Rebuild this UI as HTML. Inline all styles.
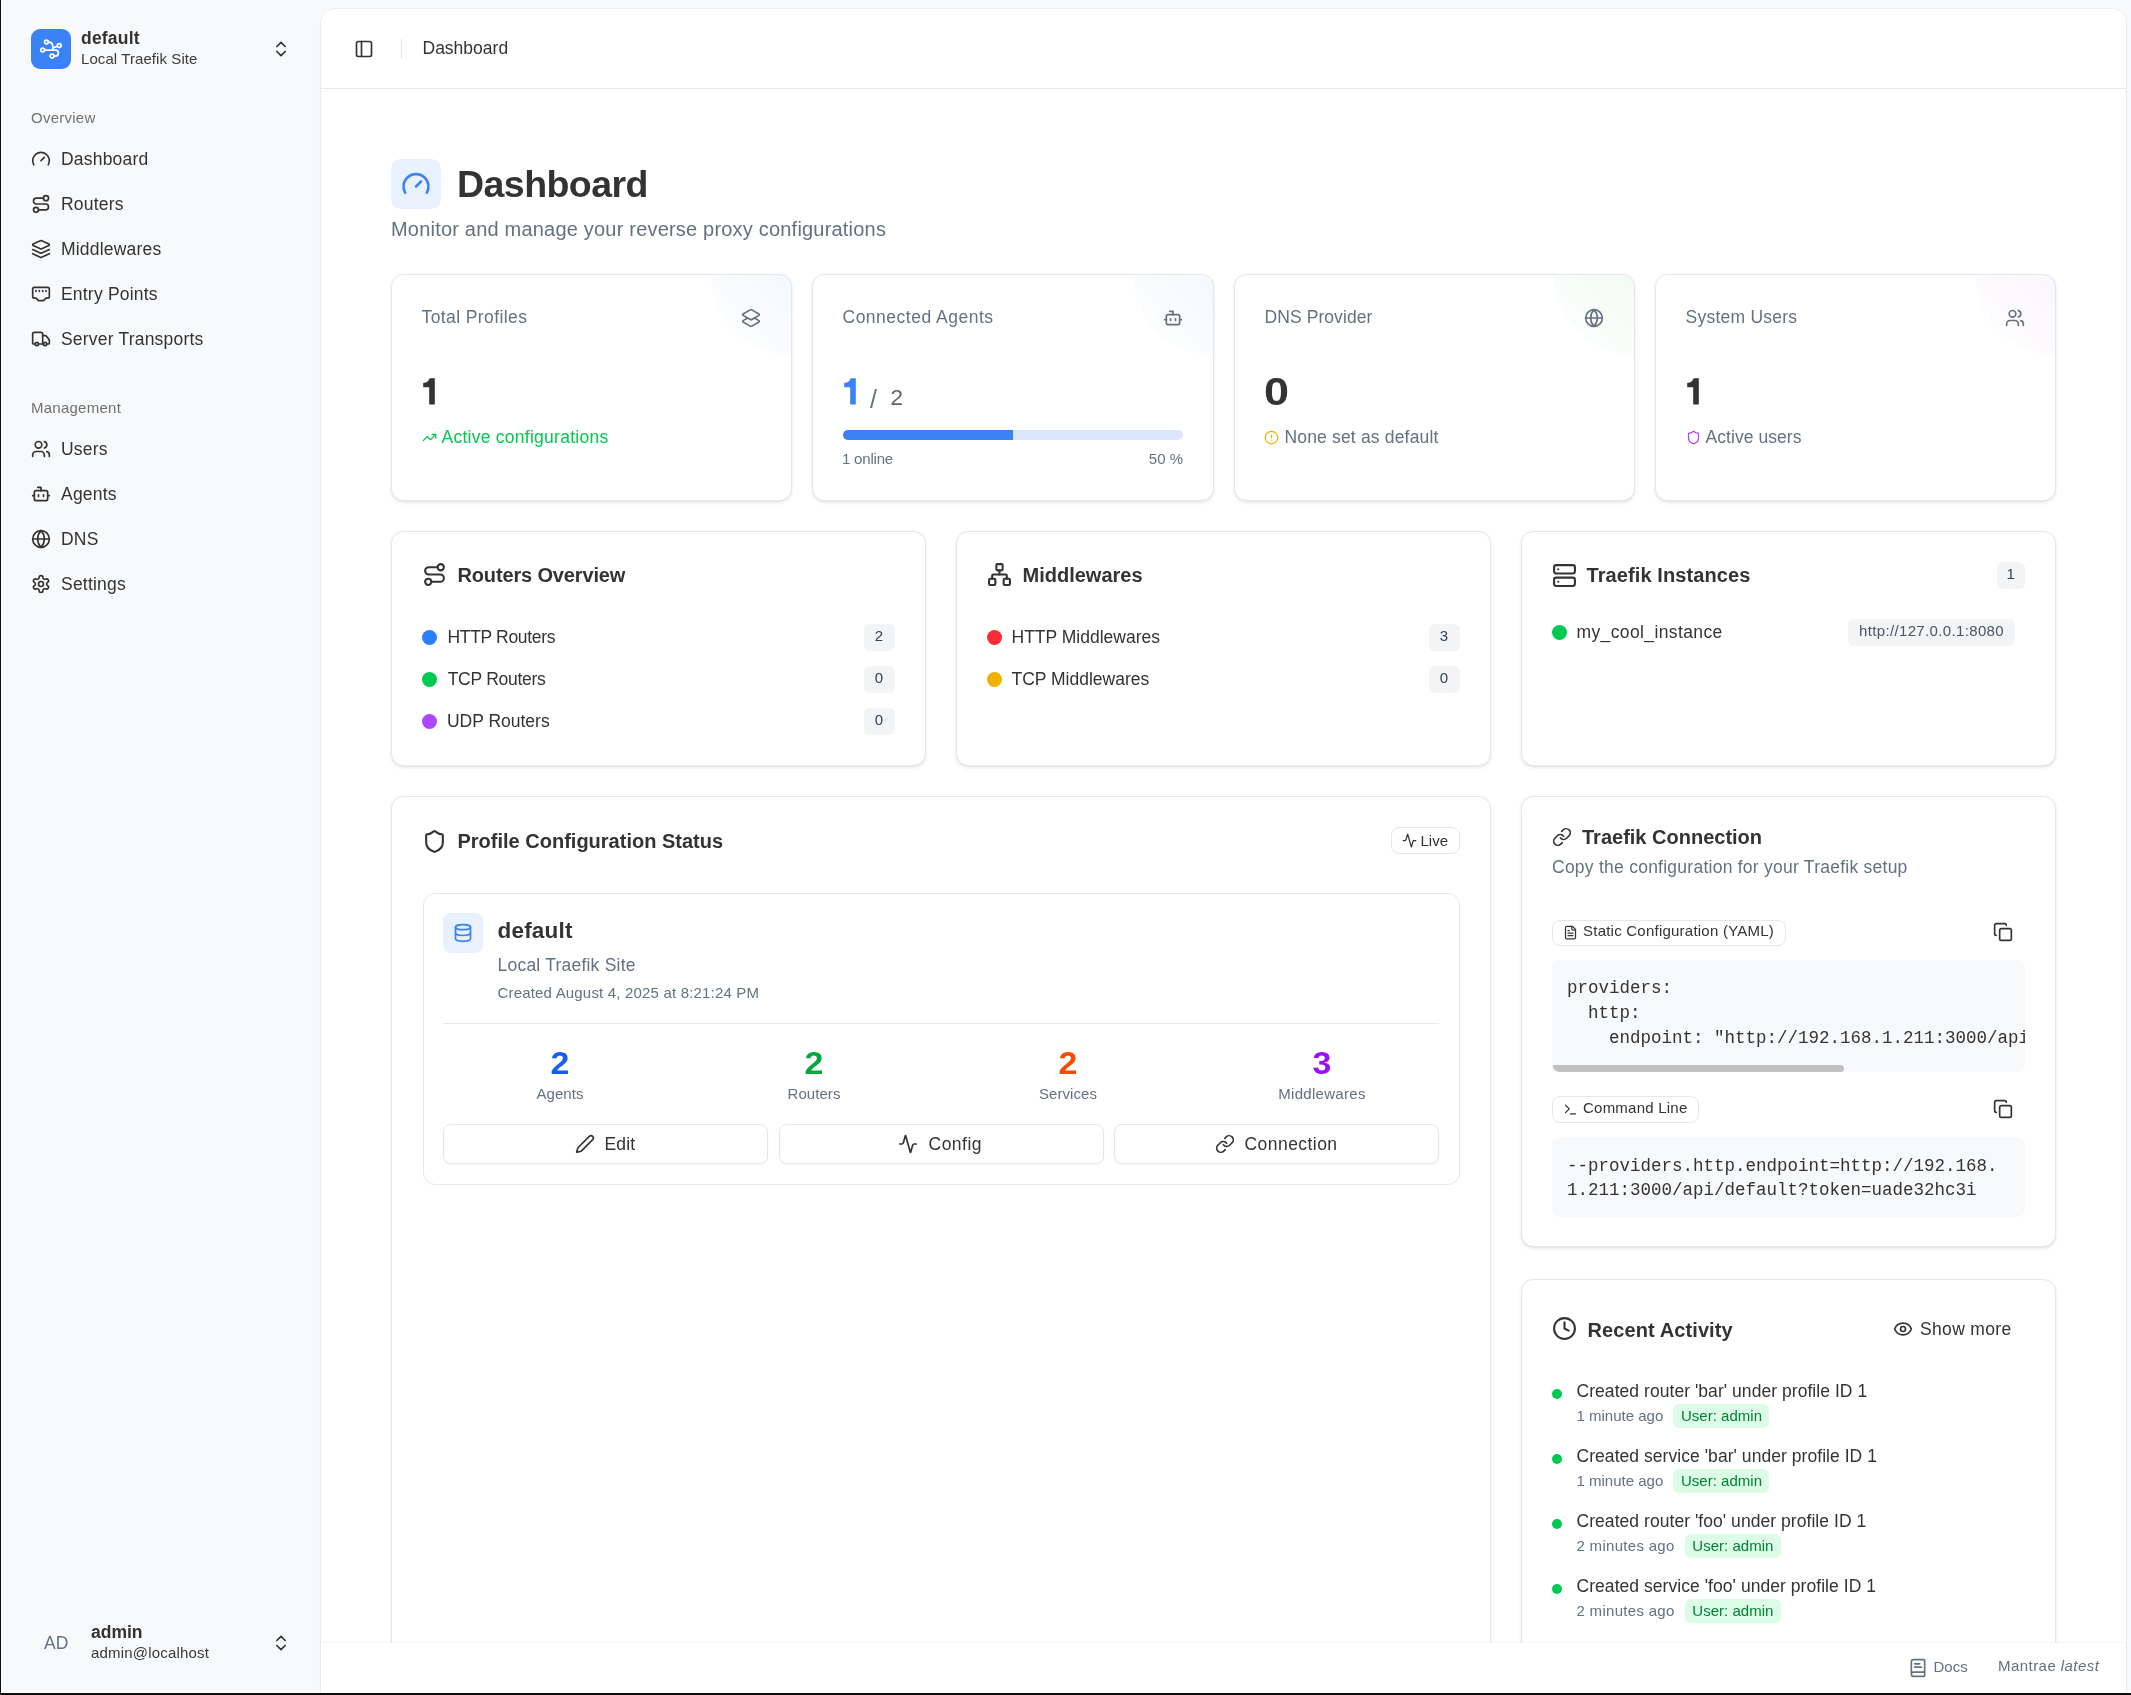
<!DOCTYPE html>
<html><head><meta charset="utf-8"><title>Mantrae Dashboard</title>
<style>
html,body{margin:0;padding:0;width:2131px;height:1695px;overflow:hidden;background:#f8f9fb;}
body{position:relative;font-family:"Liberation Sans", sans-serif;color:#333333;}
.a{position:absolute;}
.t{position:absolute;white-space:nowrap;}
.s{font-family:"Liberation Sans", sans-serif;}
.m{font-family:"Liberation Mono", monospace;}
.panel{background:#fff;border-radius:14px 14px 0 0;box-shadow:0 0 0 1px rgba(0,0,0,0.035),0 1px 3px rgba(0,0,0,0.06);}
.card{background:#fff;border:1px solid #e5e7eb;border-radius:12.5px;box-sizing:border-box;box-shadow:0 1.25px 3.75px rgba(0,0,0,0.08),0 1.25px 2.5px -1.25px rgba(0,0,0,0.08);}
.btn{background:#fff;border:1px solid #e5e7eb;border-radius:8px;box-sizing:border-box;box-shadow:0 1px 2px rgba(0,0,0,0.05);}
.code{background:#f8f9fb;border-radius:8px;overflow:hidden;}
svg{display:block;}
</style></head><body><div id="root" style="position:absolute;left:0;top:0;width:2131px;height:1695px;will-change:transform">
<div class="a" style="left:31px;top:29px;width:40px;height:40px;background:#3b82f6;border-radius:9px"></div>
<svg class="a" style="left:31px;top:29px" width="40" height="40" viewBox="0 0 40 40" fill="none" stroke="#fff" stroke-width="1.75" stroke-linecap="round" stroke-linejoin="round"><circle cx="15.5" cy="13" r="1.9"/><circle cx="28.2" cy="16.6" r="1.9"/><circle cx="11.7" cy="21" r="1.9"/><circle cx="21.1" cy="27.1" r="1.9"/><path d="M17.4 13.1C20.2 13.1 21.8 15 21.8 17.6V21"/><path d="M26.4 17.3 22.3 18.9"/><path d="M13.6 21H24.4A3 3 0 0 1 24.4 27H23"/></svg>
<div class="t s" style="left:81.00px;top:27.80px;font-size:17.5px;line-height:21.88px;font-weight:700;letter-spacing:0.2px;">default</div>
<div class="t s" style="left:81.00px;top:50.23px;font-size:15px;line-height:18.75px;color:#3a3a3a;letter-spacing:0.08px;">Local Traefik Site</div>
<svg class="a" style="left:270.7px;top:39.3px" width="20" height="20" viewBox="0 0 24 24" fill="none" stroke="#333333" stroke-width="2" stroke-linecap="round" stroke-linejoin="round"><path d="m7 15 5 5 5-5"/><path d="m7 9 5-5 5 5"/></svg>
<div class="t s" style="left:31.00px;top:109.13px;font-size:15px;line-height:18.75px;color:#717171;letter-spacing:0.25px;">Overview</div>
<svg class="a" style="left:31px;top:148.8px" width="20" height="20" viewBox="0 0 24 24" fill="none" stroke="#333333" stroke-width="2" stroke-linecap="round" stroke-linejoin="round"><path d="m12 14 4-4"/><path d="M3.34 19a10 10 0 1 1 17.32 0"/></svg>
<div class="t s" style="left:61.00px;top:148.70px;font-size:17.5px;line-height:21.88px;letter-spacing:0.2px;">Dashboard</div>
<svg class="a" style="left:31px;top:193.8px" width="20" height="20" viewBox="0 0 24 24" fill="none" stroke="#333333" stroke-width="2" stroke-linecap="round" stroke-linejoin="round"><circle cx="6" cy="19" r="3"/><path d="M9 19h8.5a3.5 3.5 0 0 0 0-7h-11a3.5 3.5 0 0 1 0-7H15"/><circle cx="18" cy="5" r="3"/></svg>
<div class="t s" style="left:61.00px;top:193.70px;font-size:17.5px;line-height:21.88px;letter-spacing:0.2px;">Routers</div>
<svg class="a" style="left:31px;top:238.8px" width="20" height="20" viewBox="0 0 24 24" fill="none" stroke="#333333" stroke-width="2" stroke-linecap="round" stroke-linejoin="round"><path d="M12.83 2.18a2 2 0 0 0-1.66 0L2.6 6.08a1 1 0 0 0 0 1.83l8.58 3.91a2 2 0 0 0 1.66 0l8.58-3.9a1 1 0 0 0 0-1.83Z"/><path d="m22 17.65-9.17 4.16a2 2 0 0 1-1.66 0L2 17.65"/><path d="m22 12.65-9.17 4.16a2 2 0 0 1-1.66 0L2 12.65"/></svg>
<div class="t s" style="left:61.00px;top:238.70px;font-size:17.5px;line-height:21.88px;letter-spacing:0.2px;">Middlewares</div>
<svg class="a" style="left:31px;top:283.8px" width="20" height="20" viewBox="0 0 24 24" fill="none" stroke="#333333" stroke-width="2" stroke-linecap="round" stroke-linejoin="round"><path d="m15 20 3-3h2a2 2 0 0 0 2-2V6a2 2 0 0 0-2-2H4a2 2 0 0 0-2 2v9a2 2 0 0 0 2 2h2l3 3z"/><path d="M6 8v1"/><path d="M10 8v1"/><path d="M14 8v1"/><path d="M18 8v1"/></svg>
<div class="t s" style="left:61.00px;top:283.70px;font-size:17.5px;line-height:21.88px;letter-spacing:0.2px;">Entry Points</div>
<svg class="a" style="left:31px;top:328.8px" width="20" height="20" viewBox="0 0 24 24" fill="none" stroke="#333333" stroke-width="2" stroke-linecap="round" stroke-linejoin="round"><path d="M14 18V6a2 2 0 0 0-2-2H4a2 2 0 0 0-2 2v11a1 1 0 0 0 1 1h2"/><path d="M15 18H9"/><path d="M19 18h2a1 1 0 0 0 1-1v-3.65a1 1 0 0 0-.22-.624l-3.48-4.35A1 1 0 0 0 17.52 8H14"/><circle cx="17" cy="18" r="2"/><circle cx="7" cy="18" r="2"/></svg>
<div class="t s" style="left:61.00px;top:328.70px;font-size:17.5px;line-height:21.88px;letter-spacing:0.2px;">Server Transports</div>
<div class="t s" style="left:31.00px;top:399.33px;font-size:15px;line-height:18.75px;color:#717171;letter-spacing:0.25px;">Management</div>
<svg class="a" style="left:31px;top:438.8px" width="20" height="20" viewBox="0 0 24 24" fill="none" stroke="#333333" stroke-width="2" stroke-linecap="round" stroke-linejoin="round"><path d="M16 21v-2a4 4 0 0 0-4-4H6a4 4 0 0 0-4 4v2"/><path d="M16 3.128a4 4 0 0 1 0 7.744"/><path d="M22 21v-2a4 4 0 0 0-3-3.87"/><circle cx="9" cy="7" r="4"/></svg>
<div class="t s" style="left:61.00px;top:438.70px;font-size:17.5px;line-height:21.88px;letter-spacing:0.22px;">Users</div>
<svg class="a" style="left:31px;top:483.8px" width="20" height="20" viewBox="0 0 24 24" fill="none" stroke="#333333" stroke-width="2" stroke-linecap="round" stroke-linejoin="round"><path d="M12 8V4H8"/><rect width="16" height="12" x="4" y="8" rx="2"/><path d="M2 14h2"/><path d="M20 14h2"/><path d="M15 13v2"/><path d="M9 13v2"/></svg>
<div class="t s" style="left:61.00px;top:483.70px;font-size:17.5px;line-height:21.88px;letter-spacing:0.22px;">Agents</div>
<svg class="a" style="left:31px;top:528.8px" width="20" height="20" viewBox="0 0 24 24" fill="none" stroke="#333333" stroke-width="2" stroke-linecap="round" stroke-linejoin="round"><circle cx="12" cy="12" r="10"/><path d="M12 2a14.5 14.5 0 0 0 0 20 14.5 14.5 0 0 0 0-20"/><path d="M2 12h20"/></svg>
<div class="t s" style="left:61.00px;top:528.70px;font-size:17.5px;line-height:21.88px;letter-spacing:0.22px;">DNS</div>
<svg class="a" style="left:31px;top:573.8px" width="20" height="20" viewBox="0 0 24 24" fill="none" stroke="#333333" stroke-width="2" stroke-linecap="round" stroke-linejoin="round"><path d="M12.22 2h-.44a2 2 0 0 0-2 2v.18a2 2 0 0 1-1 1.73l-.43.25a2 2 0 0 1-2 0l-.15-.08a2 2 0 0 0-2.73.73l-.22.38a2 2 0 0 0 .73 2.73l.15.1a2 2 0 0 1 1 1.72v.51a2 2 0 0 1-1 1.74l-.15.09a2 2 0 0 0-.73 2.73l.22.38a2 2 0 0 0 2.73.73l.15-.08a2 2 0 0 1 2 0l.43.25a2 2 0 0 1 1 1.73V20a2 2 0 0 0 2 2h.44a2 2 0 0 0 2-2v-.18a2 2 0 0 1 1-1.73l.43-.25a2 2 0 0 1 2 0l.15.08a2 2 0 0 0 2.73-.73l.22-.39a2 2 0 0 0-.73-2.73l-.15-.08a2 2 0 0 1-1-1.74v-.5a2 2 0 0 1 1-1.74l.15-.09a2 2 0 0 0 .73-2.73l-.22-.38a2 2 0 0 0-2.73-.73l-.15.08a2 2 0 0 1-2 0l-.43-.25a2 2 0 0 1-1-1.73V4a2 2 0 0 0-2-2z"/><circle cx="12" cy="12" r="3"/></svg>
<div class="t s" style="left:61.00px;top:573.70px;font-size:17.5px;line-height:21.88px;letter-spacing:0.22px;">Settings</div>
<div class="t s" style="left:44.00px;top:1633.10px;font-size:17.5px;line-height:21.88px;color:#657081;">AD</div>
<div class="t s" style="left:91.00px;top:1621.70px;font-size:17.5px;line-height:21.88px;font-weight:700;">admin</div>
<div class="t s" style="left:91.00px;top:1644.33px;font-size:15px;line-height:18.75px;color:#3a3a3a;letter-spacing:0.18px;">admin@localhost</div>
<svg class="a" style="left:270.7px;top:1633px" width="20" height="20" viewBox="0 0 24 24" fill="none" stroke="#333333" stroke-width="2" stroke-linecap="round" stroke-linejoin="round"><path d="m7 15 5 5 5-5"/><path d="m7 9 5-5 5 5"/></svg>
<div class="a panel" style="left:321px;top:9px;width:1805px;height:1683px">
</div>
<div class="a" style="left:321px;top:88px;width:1805px;height:1px;background:#e5e7eb"></div>
<svg class="a" style="left:354px;top:39px" width="20" height="20" viewBox="0 0 24 24" fill="none" stroke="#333333" stroke-width="2" stroke-linecap="round" stroke-linejoin="round"><rect width="18" height="18" x="3" y="3" rx="2"/><path d="M9 3v18"/></svg>
<div class="a" style="left:401px;top:39px;width:1px;height:20px;background:#e3e5ea"></div>
<div class="t s" style="left:422.50px;top:37.50px;font-size:17.5px;line-height:21.88px;">Dashboard</div>
<div class="a" style="left:391px;top:159px;width:50px;height:50px;background:#eaf1fe;border-radius:10px"></div>
<svg class="a" style="left:401px;top:169px" width="30" height="30" viewBox="0 0 24 24" fill="none" stroke="#3b82f6" stroke-width="2" stroke-linecap="round" stroke-linejoin="round"><path d="m12 14 4-4"/><path d="M3.34 19a10 10 0 1 1 17.32 0"/></svg>
<div class="t s" style="left:457.00px;top:160.57px;font-size:37.5px;line-height:46.88px;font-weight:700;letter-spacing:-0.55px;">Dashboard</div>
<div class="t s" style="left:391.00px;top:217.47px;font-size:20px;line-height:25.0px;color:#657081;letter-spacing:0.2px;">Monitor and manage your reverse proxy configurations</div>
<div class="a card" style="left:391px;top:274px;width:401px;height:227px;overflow:hidden"><div style="position:absolute;right:-80px;top:-80px;width:160px;height:160px;border-radius:50%;background:linear-gradient(225deg,rgba(59,130,246,0.11),rgba(255,255,255,0))"></div></div>
<div class="t s" style="left:421.50px;top:306.90px;font-size:17.5px;line-height:21.88px;color:#657081;letter-spacing:0.4px;">Total Profiles</div>
<svg class="a" style="left:741px;top:308px" width="20" height="20" viewBox="0 0 24 24" fill="none" stroke="#657081" stroke-width="2" stroke-linecap="round" stroke-linejoin="round"><path d="m16.02 12 5.48 3.13a1 1 0 0 1 0 1.74L13 21.74a2 2 0 0 1-2 0l-8.5-4.87a1 1 0 0 1 0-1.74L7.98 12"/><path d="M13 13.74a2 2 0 0 1-2 0L2.5 8.87a1 1 0 0 1 0-1.74L11 2.26a2 2 0 0 1 2 0l8.5 4.87a1 1 0 0 1 0 1.74Z"/></svg>
<div class="a card" style="left:812px;top:274px;width:402px;height:227px;overflow:hidden"><div style="position:absolute;right:-80px;top:-80px;width:160px;height:160px;border-radius:50%;background:linear-gradient(225deg,rgba(59,130,246,0.11),rgba(255,255,255,0))"></div></div>
<div class="t s" style="left:842.50px;top:306.90px;font-size:17.5px;line-height:21.88px;color:#657081;letter-spacing:0.5px;">Connected Agents</div>
<svg class="a" style="left:1163px;top:308px" width="20" height="20" viewBox="0 0 24 24" fill="none" stroke="#657081" stroke-width="2" stroke-linecap="round" stroke-linejoin="round"><path d="M12 8V4H8"/><rect width="16" height="12" x="4" y="8" rx="2"/><path d="M2 14h2"/><path d="M20 14h2"/><path d="M15 13v2"/><path d="M9 13v2"/></svg>
<div class="a card" style="left:1234px;top:274px;width:401px;height:227px;overflow:hidden"><div style="position:absolute;right:-80px;top:-80px;width:160px;height:160px;border-radius:50%;background:linear-gradient(225deg,rgba(34,197,94,0.12),rgba(255,255,255,0))"></div></div>
<div class="t s" style="left:1264.50px;top:306.90px;font-size:17.5px;line-height:21.88px;color:#657081;letter-spacing:0.08px;">DNS Provider</div>
<svg class="a" style="left:1584px;top:308px" width="20" height="20" viewBox="0 0 24 24" fill="none" stroke="#657081" stroke-width="2" stroke-linecap="round" stroke-linejoin="round"><circle cx="12" cy="12" r="10"/><path d="M12 2a14.5 14.5 0 0 0 0 20 14.5 14.5 0 0 0 0-20"/><path d="M2 12h20"/></svg>
<div class="a card" style="left:1655px;top:274px;width:401px;height:227px;overflow:hidden"><div style="position:absolute;right:-80px;top:-80px;width:160px;height:160px;border-radius:50%;background:linear-gradient(225deg,rgba(168,85,247,0.11),rgba(255,255,255,0))"></div></div>
<div class="t s" style="left:1685.50px;top:306.90px;font-size:17.5px;line-height:21.88px;color:#657081;letter-spacing:0.24px;">System Users</div>
<svg class="a" style="left:2005px;top:308px" width="20" height="20" viewBox="0 0 24 24" fill="none" stroke="#657081" stroke-width="2" stroke-linecap="round" stroke-linejoin="round"><path d="M16 21v-2a4 4 0 0 0-4-4H6a4 4 0 0 0-4 4v2"/><path d="M16 3.128a4 4 0 0 1 0 7.744"/><path d="M22 21v-2a4 4 0 0 0-3-3.87"/><circle cx="9" cy="7" r="4"/></svg>
<svg class="a" style="left:423px;top:378.3px" width="13" height="27" viewBox="0 0 13 27"><path d="M0.2 4.9C2.6 4.9 5.2 4.3 6.6 0.3H11.8V26.6H6.2V9.3H0.2Z" fill="#333333"/></svg>
<svg class="a" style="left:422px;top:429.5px" width="15" height="15" viewBox="0 0 24 24" fill="none" stroke="#00c951" stroke-width="2" stroke-linecap="round" stroke-linejoin="round"><path d="M22 7 13.5 15.5 8.5 10.5 2 17"/><path d="M16 7h6v6"/></svg>
<div class="t s" style="left:441.50px;top:426.90px;font-size:17.5px;line-height:21.88px;color:#00c951;letter-spacing:0.26px;">Active configurations</div>
<svg class="a" style="left:843.5px;top:378.3px" width="13" height="27" viewBox="0 0 13 27"><path d="M0.2 4.9C2.6 4.9 5.2 4.3 6.6 0.3H11.8V26.6H6.2V9.3H0.2Z" fill="#3b82f6"/></svg>
<div class="t s" style="left:870.00px;top:383.71px;font-size:25px;line-height:31.25px;color:#657081;">/</div>
<div class="t s" style="left:890.50px;top:384.04px;font-size:22.5px;line-height:28.12px;color:#5b6472;">2</div>
<div class="a" style="left:843px;top:430px;width:340px;height:10px;background:#dbe7fd;border-radius:5px;overflow:hidden"></div>
<div class="a" style="left:843px;top:430px;width:170px;height:10px;background:#3b82f6;border-radius:5px 0 0 5px"></div>
<div class="t s" style="left:842.00px;top:450.13px;font-size:15px;line-height:18.75px;color:#657081;letter-spacing:-0.2px;">1 online</div>
<div class="t s" style="right:948.00px;top:450.13px;font-size:15px;line-height:18.75px;color:#657081;">50 %</div>
<div class="t s" style="left:1264.20px;top:369.07px;font-size:37.5px;line-height:46.88px;font-weight:700;transform:scale(1.2,1.03);transform-origin:0 75%;">0</div>
<svg class="a" style="left:1264.4px;top:429.9px" width="15" height="15" viewBox="0 0 24 24" fill="none" stroke="#f0b100" stroke-width="2" stroke-linecap="round" stroke-linejoin="round"><circle cx="12" cy="12" r="10"/><path d="M12 8v4"/><path d="M12 16h.01"/></svg>
<div class="t s" style="left:1284.50px;top:426.90px;font-size:17.5px;line-height:21.88px;color:#657081;letter-spacing:0.17px;">None set as default</div>
<svg class="a" style="left:1686.5px;top:378.3px" width="13" height="27" viewBox="0 0 13 27"><path d="M0.2 4.9C2.6 4.9 5.2 4.3 6.6 0.3H11.8V26.6H6.2V9.3H0.2Z" fill="#333333"/></svg>
<svg class="a" style="left:1685.5px;top:429.9px" width="15" height="15" viewBox="0 0 24 24" fill="none" stroke="#ad46ff" stroke-width="2" stroke-linecap="round" stroke-linejoin="round"><path d="M20 13c0 5-3.5 7.5-7.66 8.95a1 1 0 0 1-.67-.01C7.5 20.5 4 18 4 13V6a1 1 0 0 1 1-1c2 0 4.5-1.2 6.24-2.72a1.17 1.17 0 0 1 1.52 0C14.51 3.81 17 5 19 5a1 1 0 0 1 1 1z"/></svg>
<div class="t s" style="left:1705.50px;top:426.90px;font-size:17.5px;line-height:21.88px;color:#657081;letter-spacing:0.06px;">Active users</div>
<div class="a card" style="left:391px;top:531px;width:535px;height:235px;"></div>
<div class="a card" style="left:956px;top:531px;width:535px;height:235px;"></div>
<div class="a card" style="left:1521px;top:531px;width:535px;height:235px;"></div>
<svg class="a" style="left:422px;top:562px" width="25" height="25" viewBox="0 0 24 24" fill="none" stroke="#333333" stroke-width="2" stroke-linecap="round" stroke-linejoin="round"><circle cx="6" cy="19" r="3"/><path d="M9 19h8.5a3.5 3.5 0 0 0 0-7h-11a3.5 3.5 0 0 1 0-7H15"/><circle cx="18" cy="5" r="3"/></svg>
<div class="t s" style="left:457.50px;top:563.27px;font-size:20px;line-height:25.0px;font-weight:700;letter-spacing:-0.15px;">Routers Overview</div>
<div class="a" style="left:422.2px;top:630.0px;width:15px;height:15px;background:#2b7fff;border-radius:50%"></div>
<div class="t s" style="left:447.50px;top:627.20px;font-size:17.5px;line-height:21.88px;letter-spacing:-0.33px;">HTTP Routers</div>
<div class="a" style="left:863.5px;top:624.0px;width:31px;height:27px;background:#f3f4f6;border-radius:6px"></div>
<div class="t s" style="left:579.00px;width:600px;text-align:center;top:627.49px;font-size:15px;line-height:18.75px;color:#334155;">2</div>
<div class="a" style="left:422.2px;top:672.0px;width:15px;height:15px;background:#00c951;border-radius:50%"></div>
<div class="t s" style="left:447.70px;top:669.20px;font-size:17.5px;line-height:21.88px;letter-spacing:-0.27px;">TCP Routers</div>
<div class="a" style="left:863.5px;top:666.0px;width:31px;height:27px;background:#f3f4f6;border-radius:6px"></div>
<div class="t s" style="left:579.00px;width:600px;text-align:center;top:669.49px;font-size:15px;line-height:18.75px;color:#334155;">0</div>
<div class="a" style="left:422.2px;top:714.0px;width:15px;height:15px;background:#ad46ff;border-radius:50%"></div>
<div class="t s" style="left:446.90px;top:711.20px;font-size:17.5px;line-height:21.88px;">UDP Routers</div>
<div class="a" style="left:863.5px;top:708.0px;width:31px;height:27px;background:#f3f4f6;border-radius:6px"></div>
<div class="t s" style="left:579.00px;width:600px;text-align:center;top:711.49px;font-size:15px;line-height:18.75px;color:#334155;">0</div>
<svg class="a" style="left:987px;top:562px" width="25" height="25" viewBox="0 0 24 24" fill="none" stroke="#333333" stroke-width="2" stroke-linecap="round" stroke-linejoin="round"><rect x="16" y="16" width="6" height="6" rx="1"/><rect x="2" y="16" width="6" height="6" rx="1"/><rect x="9" y="2" width="6" height="6" rx="1"/><path d="M5 16v-3a1 1 0 0 1 1-1h12a1 1 0 0 1 1 1v3"/><path d="M12 12V8"/></svg>
<div class="t s" style="left:1022.50px;top:563.27px;font-size:20px;line-height:25.0px;font-weight:700;">Middlewares</div>
<div class="a" style="left:987.2px;top:630.0px;width:15px;height:15px;background:#fb2c36;border-radius:50%"></div>
<div class="t s" style="left:1011.50px;top:627.20px;font-size:17.5px;line-height:21.88px;">HTTP Middlewares</div>
<div class="a" style="left:1428.5px;top:624.0px;width:31px;height:27px;background:#f3f4f6;border-radius:6px"></div>
<div class="t s" style="left:1144.00px;width:600px;text-align:center;top:627.49px;font-size:15px;line-height:18.75px;color:#334155;">3</div>
<div class="a" style="left:987.2px;top:672.0px;width:15px;height:15px;background:#f0b100;border-radius:50%"></div>
<div class="t s" style="left:1011.50px;top:669.20px;font-size:17.5px;line-height:21.88px;">TCP Middlewares</div>
<div class="a" style="left:1428.5px;top:666.0px;width:31px;height:27px;background:#f3f4f6;border-radius:6px"></div>
<div class="t s" style="left:1144.00px;width:600px;text-align:center;top:669.49px;font-size:15px;line-height:18.75px;color:#334155;">0</div>
<svg class="a" style="left:1552px;top:563px" width="25" height="25" viewBox="0 0 24 24" fill="none" stroke="#333333" stroke-width="2" stroke-linecap="round" stroke-linejoin="round"><rect width="20" height="8" x="2" y="2" rx="2" ry="2"/><rect width="20" height="8" x="2" y="14" rx="2" ry="2"/><path d="M6 6h.01"/><path d="M6 18h.01"/></svg>
<div class="t s" style="left:1586.50px;top:563.47px;font-size:20px;line-height:25.0px;font-weight:700;letter-spacing:0.1px;">Traefik Instances</div>
<div class="a" style="left:1997px;top:562px;width:27.5px;height:26.5px;background:#f3f4f6;border-radius:6px"></div>
<div class="t s" style="left:1710.75px;width:600px;text-align:center;top:565.24px;font-size:15px;line-height:18.75px;color:#334155;">1</div>
<div class="a" style="left:1552.2px;top:624.5px;width:15px;height:15px;background:#00c951;border-radius:50%"></div>
<div class="t s" style="left:1576.50px;top:621.90px;font-size:17.5px;line-height:21.88px;letter-spacing:0.38px;">my_cool_instance</div>
<div class="a" style="left:1848px;top:619px;width:167px;height:26.5px;background:#f3f4f6;border-radius:6px"></div>
<div class="t s" style="left:1631.50px;width:600px;text-align:center;top:622.24px;font-size:15px;line-height:18.75px;color:#4a5565;letter-spacing:0.35px;">http://127.0.0.1:8080</div>
<div class="a card" style="left:391px;top:796px;width:1100px;height:1000px;"></div>
<svg class="a" style="left:421.5px;top:828.5px" width="25" height="25" viewBox="0 0 24 24" fill="none" stroke="#333333" stroke-width="2" stroke-linecap="round" stroke-linejoin="round"><path d="M20 13c0 5-3.5 7.5-7.66 8.95a1 1 0 0 1-.67-.01C7.5 20.5 4 18 4 13V6a1 1 0 0 1 1-1c2 0 4.5-1.2 6.24-2.72a1.17 1.17 0 0 1 1.52 0C14.51 3.81 17 5 19 5a1 1 0 0 1 1 1z"/></svg>
<div class="t s" style="left:457.50px;top:829.47px;font-size:20px;line-height:25.0px;font-weight:700;">Profile Configuration Status</div>
<div class="a" style="left:1390.5px;top:827px;width:69px;height:26.5px;border:1px solid #e5e7eb;border-radius:8px;box-sizing:border-box;background:#fff"></div>
<svg class="a" style="left:1401.5px;top:832.5px" width="15" height="15" viewBox="0 0 24 24" fill="none" stroke="#333333" stroke-width="2" stroke-linecap="round" stroke-linejoin="round"><path d="M22 12h-2.48a2 2 0 0 0-1.93 1.46l-2.35 8.36a.25.25 0 0 1-.48 0L9.24 2.18a.25.25 0 0 0-.48 0l-2.35 8.36A2 2 0 0 1 4.49 12H2"/></svg>
<div class="t s" style="left:1420.50px;top:831.63px;font-size:15px;line-height:18.75px;">Live</div>
<div class="a" style="left:422.5px;top:892.5px;width:1037px;height:292px;border:1px solid #e5e7eb;border-radius:12px;box-sizing:border-box"></div>
<div class="a" style="left:443px;top:913px;width:40px;height:40px;background:#eaf1fe;border-radius:8px"></div>
<svg class="a" style="left:453px;top:923px" width="20" height="20" viewBox="0 0 24 24" fill="none" stroke="#3b82f6" stroke-width="2" stroke-linecap="round" stroke-linejoin="round"><ellipse cx="12" cy="5" rx="9" ry="3"/><path d="M3 5V19A9 3 0 0 0 21 19V5"/><path d="M3 12A9 3 0 0 0 21 12"/></svg>
<div class="t s" style="left:497.50px;top:917.34px;font-size:22.5px;line-height:28.12px;font-weight:700;letter-spacing:0.2px;">default</div>
<div class="t s" style="left:497.50px;top:954.90px;font-size:17.5px;line-height:21.88px;color:#657081;letter-spacing:0.22px;">Local Traefik Site</div>
<div class="t s" style="left:497.50px;top:983.73px;font-size:15px;line-height:18.75px;color:#657081;letter-spacing:0.18px;">Created August 4, 2025 at 8:21:24 PM</div>
<div class="a" style="left:443px;top:1023px;width:996px;height:1px;background:#e5e7eb"></div>
<div class="t s" style="left:260.00px;width:600px;text-align:center;top:1044.86px;font-size:30px;line-height:37.5px;font-weight:700;color:#155dfc;transform:scale(1.13,1.06);transform-origin:50% 75%;">2</div>
<div class="t s" style="left:260.00px;width:600px;text-align:center;top:1084.83px;font-size:15px;line-height:18.75px;color:#657081;letter-spacing:0.05px;">Agents</div>
<div class="t s" style="left:514.00px;width:600px;text-align:center;top:1044.86px;font-size:30px;line-height:37.5px;font-weight:700;color:#00a63e;transform:scale(1.13,1.06);transform-origin:50% 75%;">2</div>
<div class="t s" style="left:514.00px;width:600px;text-align:center;top:1084.83px;font-size:15px;line-height:18.75px;color:#657081;letter-spacing:0.05px;">Routers</div>
<div class="t s" style="left:768.00px;width:600px;text-align:center;top:1044.86px;font-size:30px;line-height:37.5px;font-weight:700;color:#f54a00;transform:scale(1.13,1.06);transform-origin:50% 75%;">2</div>
<div class="t s" style="left:768.00px;width:600px;text-align:center;top:1084.83px;font-size:15px;line-height:18.75px;color:#657081;letter-spacing:0.05px;">Services</div>
<div class="t s" style="left:1022.00px;width:600px;text-align:center;top:1044.86px;font-size:30px;line-height:37.5px;font-weight:700;color:#9810fa;transform:scale(1.13,1.06);transform-origin:50% 75%;">3</div>
<div class="t s" style="left:1022.00px;width:600px;text-align:center;top:1084.83px;font-size:15px;line-height:18.75px;color:#657081;letter-spacing:0.3px;">Middlewares</div>
<div class="a btn" style="left:443px;top:1124px;width:325px;height:40px"></div>
<div class="a btn" style="left:778.5px;top:1124px;width:325px;height:40px"></div>
<div class="a btn" style="left:1114px;top:1124px;width:325px;height:40px"></div>
<svg class="a" style="left:575px;top:1134px" width="20" height="20" viewBox="0 0 24 24" fill="none" stroke="#333333" stroke-width="2" stroke-linecap="round" stroke-linejoin="round"><path d="M21.174 6.812a1 1 0 0 0-3.986-3.987L3.842 16.174a2 2 0 0 0-.5.83l-1.321 4.352a.5.5 0 0 0 .623.622l4.353-1.32a2 2 0 0 0 .83-.497z"/></svg>
<div class="t s" style="left:604.50px;top:1134.10px;font-size:17.5px;line-height:21.88px;letter-spacing:0.15px;">Edit</div>
<svg class="a" style="left:898px;top:1134px" width="20" height="20" viewBox="0 0 24 24" fill="none" stroke="#333333" stroke-width="2" stroke-linecap="round" stroke-linejoin="round"><path d="M22 12h-2.48a2 2 0 0 0-1.93 1.46l-2.35 8.36a.25.25 0 0 1-.48 0L9.24 2.18a.25.25 0 0 0-.48 0l-2.35 8.36A2 2 0 0 1 4.49 12H2"/></svg>
<div class="t s" style="left:928.50px;top:1134.10px;font-size:17.5px;line-height:21.88px;letter-spacing:0.5px;">Config</div>
<svg class="a" style="left:1215px;top:1134px" width="20" height="20" viewBox="0 0 24 24" fill="none" stroke="#333333" stroke-width="2" stroke-linecap="round" stroke-linejoin="round"><path d="M10 13a5 5 0 0 0 7.54.54l3-3a5 5 0 0 0-7.07-7.07l-1.72 1.71"/><path d="M14 11a5 5 0 0 0-7.54-.54l-3 3a5 5 0 0 0 7.07 7.07l1.71-1.71"/></svg>
<div class="t s" style="left:1244.50px;top:1134.10px;font-size:17.5px;line-height:21.88px;letter-spacing:0.45px;">Connection</div>
<div class="a card" style="left:1521px;top:796px;width:535px;height:451px;"></div>
<svg class="a" style="left:1551.5px;top:827px" width="20" height="20" viewBox="0 0 24 24" fill="none" stroke="#333333" stroke-width="2" stroke-linecap="round" stroke-linejoin="round"><path d="M10 13a5 5 0 0 0 7.54.54l3-3a5 5 0 0 0-7.07-7.07l-1.72 1.71"/><path d="M14 11a5 5 0 0 0-7.54-.54l-3 3a5 5 0 0 0 7.07 7.07l1.71-1.71"/></svg>
<div class="t s" style="left:1582.00px;top:825.37px;font-size:20px;line-height:25.0px;font-weight:700;">Traefik Connection</div>
<div class="t s" style="left:1552.00px;top:857.00px;font-size:17.5px;line-height:21.88px;color:#657081;letter-spacing:0.25px;">Copy the configuration for your Traefik setup</div>
<div class="a" style="left:1552px;top:919.5px;width:233.5px;height:26.5px;border:1px solid #e5e7eb;border-radius:8px;box-sizing:border-box;background:#fff"></div>
<svg class="a" style="left:1563px;top:925.25px" width="15" height="15" viewBox="0 0 24 24" fill="none" stroke="#333333" stroke-width="2" stroke-linecap="round" stroke-linejoin="round"><path d="M15 2H6a2 2 0 0 0-2 2v16a2 2 0 0 0 2 2h12a2 2 0 0 0 2-2V7Z"/><path d="M14 2v4a2 2 0 0 0 2 2h4"/><path d="M10 9H8"/><path d="M16 13H8"/><path d="M16 17H8"/></svg>
<div class="t s" style="left:1583.00px;top:922.33px;font-size:15px;line-height:18.75px;letter-spacing:0.23px;">Static Configuration (YAML)</div>
<svg class="a" style="left:1992.8px;top:921.7px" width="20" height="20" viewBox="0 0 24 24" fill="none" stroke="#333333" stroke-width="2" stroke-linecap="round" stroke-linejoin="round"><rect width="14" height="14" x="8" y="8" rx="2" ry="2"/><path d="M4 16c-1.1 0-2-.9-2-2V4c0-1.1.9-2 2-2h10c1.1 0 2 .9 2 2"/></svg>
<div class="a code" style="left:1552px;top:960px;width:473px;height:112px"><pre class="m" style="margin:0;position:absolute;left:15px;top:16px;font-size:17.5px;line-height:24.8px;color:#333">providers:
  http:
    endpoint: "http://192.168.1.211:3000/api/default?token=uade32hc3i"</pre><div style="position:absolute;left:0;top:104.5px;width:292px;height:7px;border-radius:4px;background:#c1c1c1"></div></div>
<div class="a" style="left:1552px;top:1096px;width:146.5px;height:26.5px;border:1px solid #e5e7eb;border-radius:8px;box-sizing:border-box;background:#fff"></div>
<svg class="a" style="left:1563px;top:1101.75px" width="15" height="15" viewBox="0 0 24 24" fill="none" stroke="#333333" stroke-width="2" stroke-linecap="round" stroke-linejoin="round"><path d="m4 17 6-6-6-6"/><path d="M12 19h8"/></svg>
<div class="t s" style="left:1583.00px;top:1099.03px;font-size:15px;line-height:18.75px;letter-spacing:0.23px;">Command Line</div>
<svg class="a" style="left:1992.8px;top:1098.9px" width="20" height="20" viewBox="0 0 24 24" fill="none" stroke="#333333" stroke-width="2" stroke-linecap="round" stroke-linejoin="round"><rect width="14" height="14" x="8" y="8" rx="2" ry="2"/><path d="M4 16c-1.1 0-2-.9-2-2V4c0-1.1.9-2 2-2h10c1.1 0 2 .9 2 2"/></svg>
<div class="a code" style="left:1552px;top:1137px;width:473px;height:80px"><pre class="m" style="margin:0;position:absolute;left:15px;top:16.5px;font-size:17.5px;line-height:24.5px;color:#333">--providers.http.endpoint=http://192.168.
1.211:3000/api/default?token=uade32hc3i</pre></div>
<div class="a card" style="left:1521px;top:1278.5px;width:535px;height:600px;"></div>
<svg class="a" style="left:1552px;top:1315.7px" width="25" height="25" viewBox="0 0 24 24" fill="none" stroke="#333333" stroke-width="2" stroke-linecap="round" stroke-linejoin="round"><circle cx="12" cy="12" r="10"/><path d="M12 6v6l4 2"/></svg>
<div class="t s" style="left:1587.50px;top:1317.97px;font-size:20px;line-height:25.0px;font-weight:700;letter-spacing:0.1px;">Recent Activity</div>
<svg class="a" style="left:1892.6px;top:1319px" width="20" height="20" viewBox="0 0 24 24" fill="none" stroke="#333333" stroke-width="2" stroke-linecap="round" stroke-linejoin="round"><path d="M2.062 12.348a1 1 0 0 1 0-.696 10.75 10.75 0 0 1 19.876 0 1 1 0 0 1 0 .696 10.75 10.75 0 0 1-19.876 0"/><circle cx="12" cy="12" r="3"/></svg>
<div class="t s" style="left:1920.00px;top:1318.90px;font-size:17.5px;line-height:21.88px;letter-spacing:0.33px;">Show more</div>
<div class="a" style="left:1552px;top:1389px;width:10px;height:10px;background:#00c951;border-radius:50%"></div>
<div class="t s" style="left:1576.50px;top:1380.90px;font-size:17.5px;line-height:21.88px;letter-spacing:0.05px;">Created router &#39;bar&#39; under profile ID 1</div>
<div class="t s" style="left:1576.50px;top:1406.83px;font-size:15px;line-height:18.75px;color:#657081;">1 minute ago</div>
<div class="a" style="left:1673.4px;top:1404.2px;width:96px;height:24.3px;background:#dcfce7;border-radius:6px"></div>
<div class="t s" style="left:1680.90px;top:1406.83px;font-size:15px;line-height:18.75px;color:#008236;letter-spacing:0.03px;">User: admin</div>
<div class="a" style="left:1552px;top:1454px;width:10px;height:10px;background:#00c951;border-radius:50%"></div>
<div class="t s" style="left:1576.50px;top:1445.90px;font-size:17.5px;line-height:21.88px;letter-spacing:0.05px;">Created service &#39;bar&#39; under profile ID 1</div>
<div class="t s" style="left:1576.50px;top:1471.83px;font-size:15px;line-height:18.75px;color:#657081;">1 minute ago</div>
<div class="a" style="left:1673.4px;top:1469.2px;width:96px;height:24.3px;background:#dcfce7;border-radius:6px"></div>
<div class="t s" style="left:1680.90px;top:1471.83px;font-size:15px;line-height:18.75px;color:#008236;letter-spacing:0.03px;">User: admin</div>
<div class="a" style="left:1552px;top:1519px;width:10px;height:10px;background:#00c951;border-radius:50%"></div>
<div class="t s" style="left:1576.50px;top:1510.90px;font-size:17.5px;line-height:21.88px;letter-spacing:0.05px;">Created router &#39;foo&#39; under profile ID 1</div>
<div class="t s" style="left:1576.50px;top:1536.83px;font-size:15px;line-height:18.75px;color:#657081;letter-spacing:0.3px;">2 minutes ago</div>
<div class="a" style="left:1684.8px;top:1534.2px;width:96px;height:24.3px;background:#dcfce7;border-radius:6px"></div>
<div class="t s" style="left:1692.30px;top:1536.83px;font-size:15px;line-height:18.75px;color:#008236;letter-spacing:0.03px;">User: admin</div>
<div class="a" style="left:1552px;top:1584px;width:10px;height:10px;background:#00c951;border-radius:50%"></div>
<div class="t s" style="left:1576.50px;top:1575.90px;font-size:17.5px;line-height:21.88px;letter-spacing:0.05px;">Created service &#39;foo&#39; under profile ID 1</div>
<div class="t s" style="left:1576.50px;top:1601.83px;font-size:15px;line-height:18.75px;color:#657081;letter-spacing:0.3px;">2 minutes ago</div>
<div class="a" style="left:1684.8px;top:1599.2px;width:96px;height:24.3px;background:#dcfce7;border-radius:6px"></div>
<div class="t s" style="left:1692.30px;top:1601.83px;font-size:15px;line-height:18.75px;color:#008236;letter-spacing:0.03px;">User: admin</div>
<div class="a" style="left:321px;top:1643px;width:1805px;height:50px;background:#fff;box-shadow:0 -1px 3px rgba(0,0,0,0.045)"></div>
<svg class="a" style="left:1908px;top:1657.5px" width="20" height="20" viewBox="0 0 24 24" fill="none" stroke="#657081" stroke-width="2" stroke-linecap="round" stroke-linejoin="round"><path d="M4 19.5v-15A2.5 2.5 0 0 1 6.5 2H19a1 1 0 0 1 1 1v18a1 1 0 0 1-1 1H6.5a1 1 0 0 1 0-5H20"/><path d="M8 11h8"/><path d="M8 7h6"/></svg>
<div class="t s" style="left:1933.50px;top:1658.13px;font-size:15px;line-height:18.75px;color:#657081;">Docs</div>
<div class="t s" style="left:1998px;top:1657.23px;font-size:15px;line-height:18.75px;color:#657081;letter-spacing:0.45px">Mantrae <i>latest</i></div>
<div class="a" style="left:0px;top:0px;width:1px;height:1695px;background:#0b0e12"></div>
<div class="a" style="left:1px;top:0px;width:1px;height:1693px;background:#ffffff"></div>
<div class="a" style="left:1px;top:1692px;width:2130px;height:1px;background:#ffffff"></div>
<div class="a" style="left:0px;top:1693px;width:2131px;height:2px;background:#0d0b08"></div>
</div></body></html>
